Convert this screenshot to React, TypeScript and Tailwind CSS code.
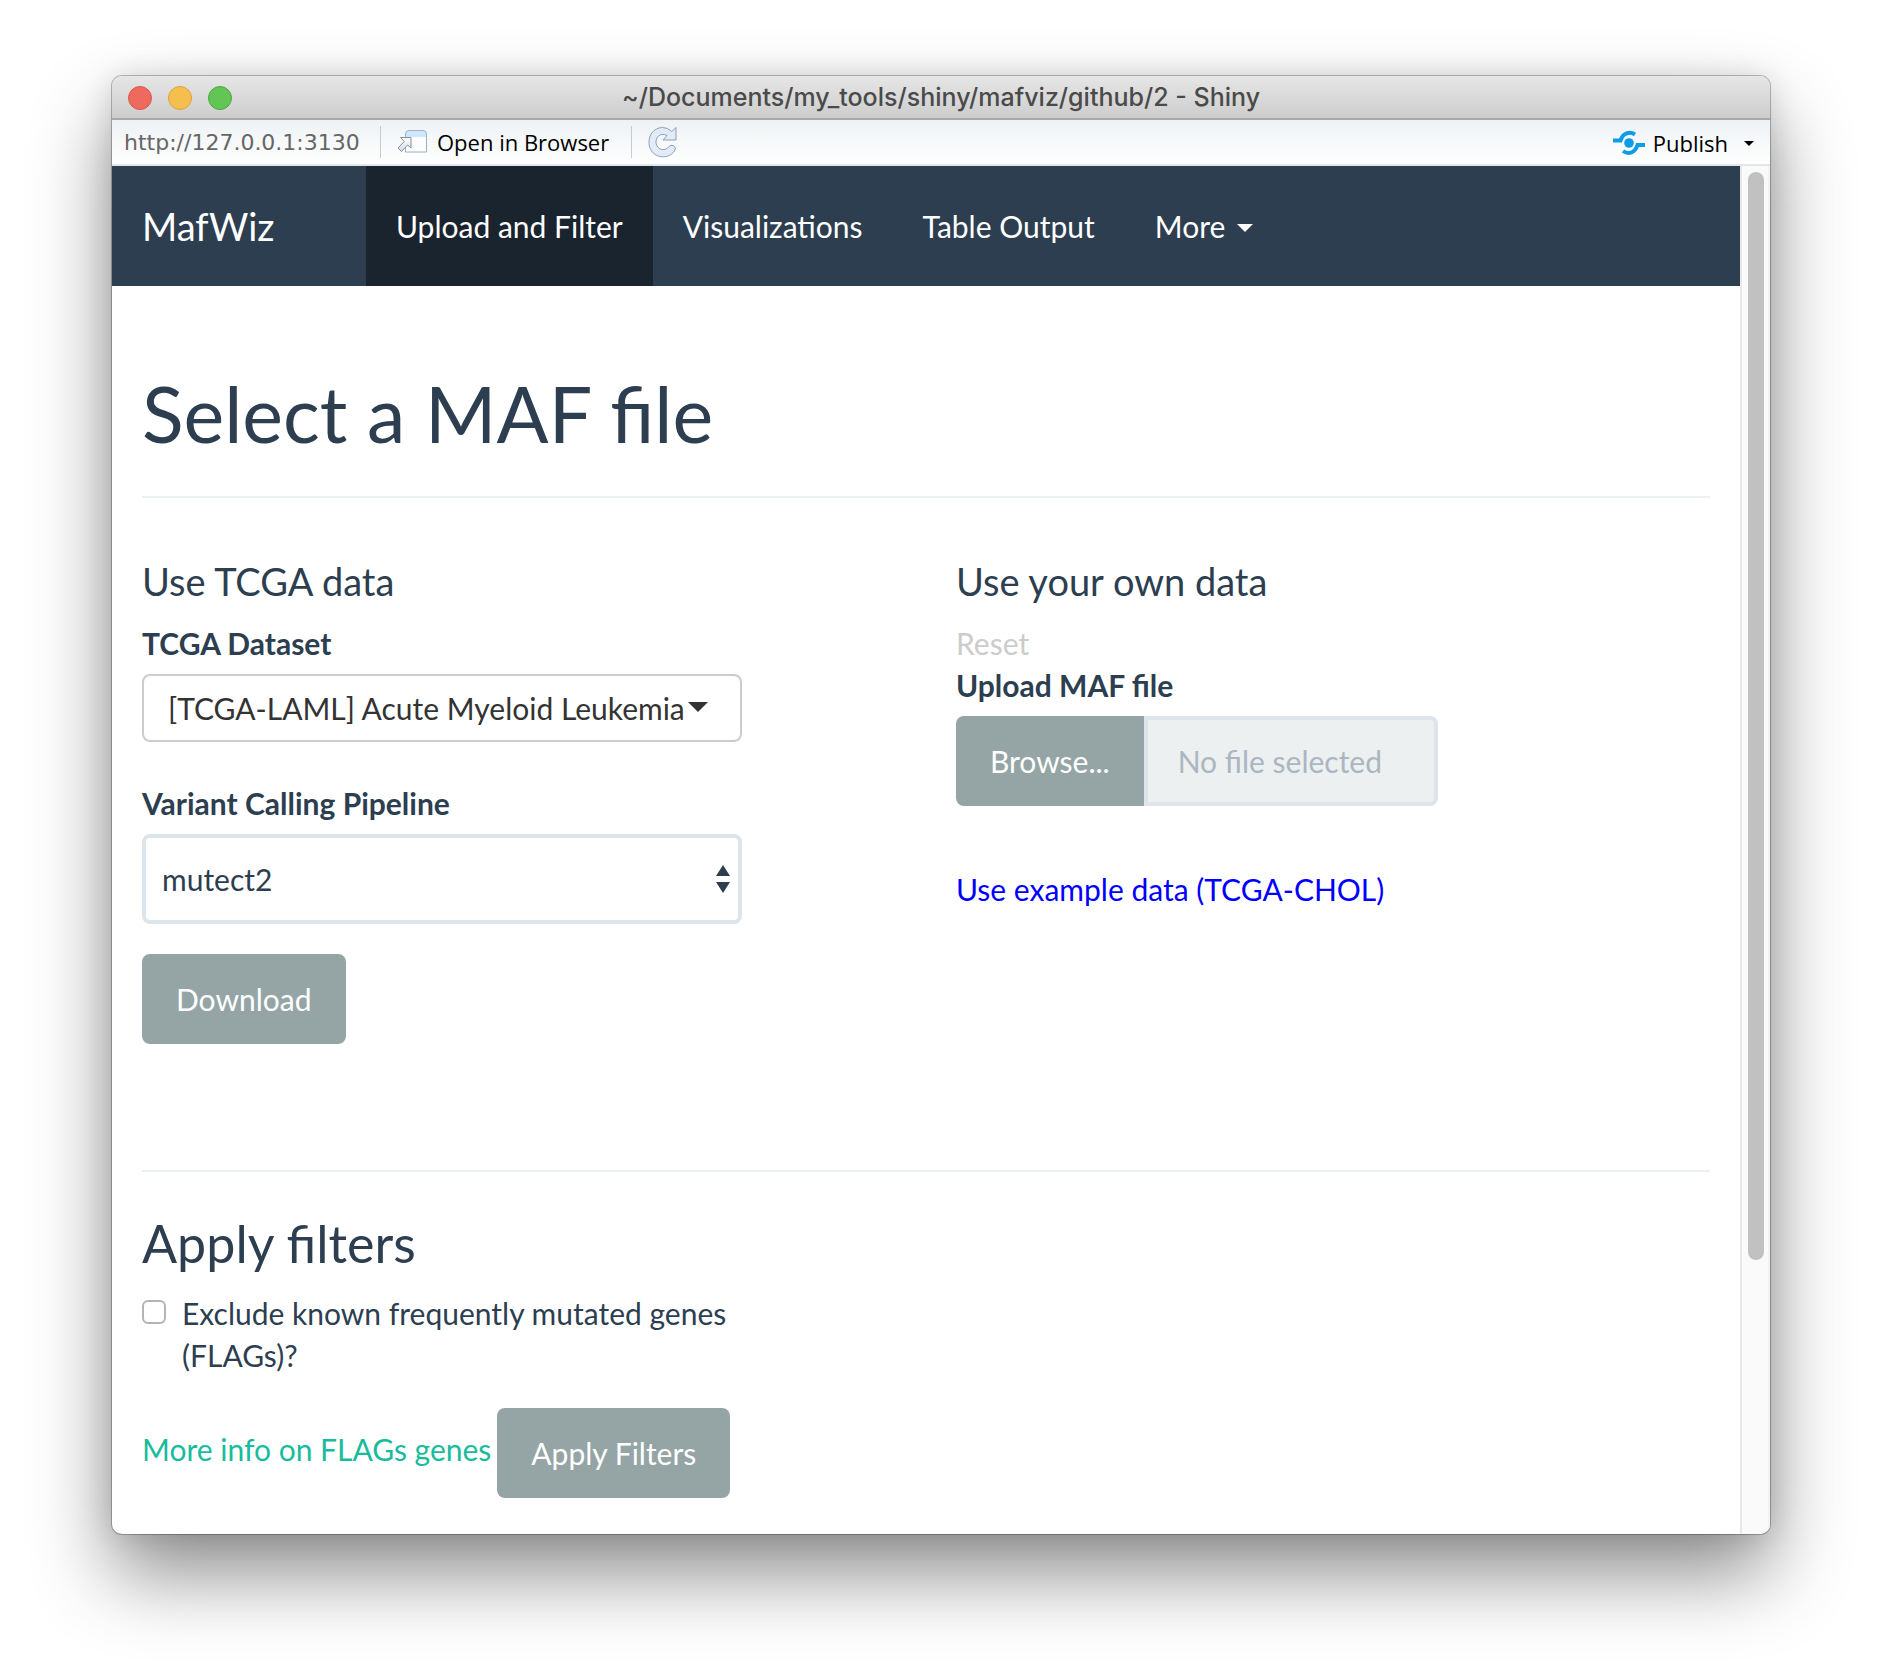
import React from "react";

const lato = "font-['Lato',sans-serif]";

function OpenIcon() {
  return (
    <svg width="30" height="26" viewBox="0 0 30 26" fill="none" aria-hidden="true">
      <defs>
        <linearGradient id="arrow" x1="0" y1="0" x2="0" y2="1">
          <stop offset="0" stopColor="#ffffff" />
          <stop offset="1" stopColor="#d5dbe2" />
        </linearGradient>
      </defs>
      <path d="M8.500 23V5q0-3.500 3.500-3.500h14q3.500 0 3.500 3.500v18z" fill="#fdfdff" />
      <path d="M8.500 8V5q0-3.500 3.500-3.500h14q3.500 0 3.500 3.500v3z" fill="#cfe6fb" />
      <path d="M8.500 23V5q0-3.500 3.500-3.500h14q3.500 0 3.500 3.500v18z" stroke="#9ab0c4" />
      <path d="M3.500 8.500h10.500v10.500l-3.300-3-6.200 6.500-3.500-3.500 6.300-6.500z" fill="url(#arrow)" stroke="#8090a0" />
    </svg>
  );
}

function ReloadIcon() {
  return (
    <svg width="29" height="32" viewBox="0 0 29 32" aria-hidden="true">
      <path
        d="M28 1.500V14H15l4-4.500C12 6 7.500 11.500 8 17c1 6.500 8.500 9 12.500 4q2.300-3 5.300-1.200t.7 5.200C20.500 33.500 6 33 1.700 21.500-1.500 10 6 1.500 14.500 1.500q5.500 0 9.300 4z"
        fill="#e2ecf8"
        stroke="#8f9fb3"
        strokeLinejoin="round"
      />
    </svg>
  );
}

function PublishIcon() {
  return (
    <svg width="32" height="26" viewBox="0 0 32 26" fill="none" aria-hidden="true">
      <circle cx="16" cy="13" r="4.800" fill="#0c9cea" />
      <path d="M0 10.500h7.500C10 3 16.500 1 22 4.500" stroke="#0c9cea" strokeWidth="4" />
      <path d="M32 15h-7.500C22 23 15.500 25 10 21" stroke="#0c9cea" strokeWidth="4" />
    </svg>
  );
}

function Caret({ className }: { className: string }) {
  return (
    <svg className={className} viewBox="0 0 16 8" fill="currentColor" preserveAspectRatio="none" aria-hidden="true">
      <path d="M0 0h16l-8 8z" />
    </svg>
  );
}

const navItem = "flex h-[120px] items-center px-[30px] text-[30px] text-white";
const greyButton = "h-[90px] bg-[#95a5a6] px-[34px] text-[30px] leading-[42px] text-white";

export default function App() {
  return (
    <div className="px-28 pt-[76px] pb-[148px]">
      <div className="overflow-hidden rounded-[10px] bg-white shadow-[0_0_0_1px_rgba(0,0,0,0.25),0_40px_80px_rgba(0,0,0,0.45),0_0_30px_rgba(0,0,0,0.12)]">
        <header className="grid h-11 grid-cols-[1fr_auto_1fr] items-center border-b-2 border-[#a8a8a8] bg-linear-to-b from-[#e6e6e6] to-[#cdcdcd] px-4 pt-0.5">
          <div className="flex gap-4">
            <button aria-label="Close" className="size-6 rounded-full border border-[#d9584e] bg-[#ee6a5f]" />
            <button aria-label="Minimize" className="size-6 rounded-full border border-[#dca23c] bg-[#f5bf4f]" />
            <button aria-label="Zoom" className="size-6 rounded-full border border-[#4fa73f] bg-[#61c654]" />
          </div>
          <h1 className="font-['Inter',sans-serif] text-[25px] font-medium text-[#4a4a4a]">~/Documents/my_tools/shiny/mafviz/github/2 - Shiny</h1>
        </header>

        <div className="flex h-[46px] items-center border-b-2 border-[#e2e6ea] bg-linear-to-b from-[#eef2f4] to-white pr-4 pl-3 font-['Open_Sans',sans-serif] text-[22px] text-black">
          <span className="min-w-60 font-['DejaVu_Sans',sans-serif] text-[#666]">http://127.0.0.1:3130</span>
          <span className="mx-4 h-8 w-px bg-[#c8cbce]" />
          <button className="flex min-w-[218px] items-center gap-2.5">
            <OpenIcon />
            Open in Browser
          </button>
          <span className="mx-4 h-8 w-px bg-[#c8cbce]" />
          <button aria-label="Reload">
            <ReloadIcon />
          </button>
          <button className="ml-auto flex items-center gap-2 pt-0.5">
            <PublishIcon />
            Publish
            <Caret className="ml-2 h-[5px] w-2.5" />
          </button>
        </div>

        <div className={`${lato} flex text-[#2c3e50]`}>
          <div className="min-w-0 flex-1">
            <nav className="flex bg-[#2c3e50]">
              <a href="#" className="flex h-[120px] w-[254px] items-center pl-[30px] text-[38px] text-white">
                MafWiz
              </a>
              <a href="#upload" className={`${navItem} bg-[#1a242f]`}>Upload and Filter</a>
              <a href="#visualizations" className={navItem}>Visualizations</a>
              <a href="#table" className={navItem}>Table Output</a>
              <button className={`${navItem} gap-3`}>
                More
                <Caret className="mt-1 h-2 w-4" />
              </button>
            </nav>

            <main className="px-[30px] pt-[84px] pb-9">
              <h2 className="text-[77px] leading-[86px]">Select a MAF file</h2>
              <hr className="mt-10 border-t-2 border-[#ecf0f1]" />

              <div className="-mx-[30px] grid grid-cols-2">
                <section className="mt-[62px] px-[30px]">
                  <h3 className="text-[38px] leading-[42px]">Use TCGA data</h3>
                  <label htmlFor="dataset" className="mt-5 block text-[30px] leading-[42px] font-bold">TCGA Dataset</label>
                  <div className="relative mt-2.5 max-w-[600px]">
                    <select id="dataset" className="h-[68px] w-full appearance-none rounded-lg border-2 border-[#ccc] bg-white px-6 text-[30px] text-[#333]">
                      <option>[TCGA-LAML] Acute Myeloid Leukemia</option>
                    </select>
                    <Caret className="pointer-events-none absolute top-7 right-[34px] h-2.5 w-5 text-[#333]" />
                  </div>
                  <label htmlFor="pipeline" className="mt-10 block text-[30px] leading-[42px] font-bold">Variant Calling Pipeline</label>
                  <div className="relative mt-2.5 max-w-[600px]">
                    <select id="pipeline" className="h-[90px] w-full appearance-none rounded-lg border-4 border-[#dce4ec] bg-white px-4 text-[30px]">
                      <option>mutect2</option>
                    </select>
                    <svg className="pointer-events-none absolute top-[31px] right-3 h-7 w-3.5" viewBox="0 0 14 28" fill="currentColor" aria-hidden="true">
                      <path d="M7 0l7 11H0zM7 28l7-11H0z" />
                    </svg>
                  </div>
                  <button className={`${greyButton} mt-[30px] rounded-lg`}>Download</button>
                </section>

                <section className="mt-[62px] px-[30px]">
                  <h3 className="text-[38px] leading-[42px]">Use your own data</h3>
                  <button className="mt-5 block text-[30px] leading-[42px] text-[#ccc]">Reset</button>
                  <label htmlFor="file" className="block text-[30px] leading-[42px] font-bold">Upload MAF file</label>
                  <div className="mt-2.5 flex max-w-[482px]">
                    <button className={`${greyButton} rounded-l-lg`}>Browse...</button>
                    <input
                      id="file"
                      readOnly
                      placeholder="No file selected"
                      className="h-[90px] min-w-0 flex-1 rounded-r-lg border-4 border-[#dce4ec] bg-[#ecf0f1] px-[30px] text-[30px] placeholder:text-[#acb6c0]"
                    />
                  </div>
                  <a href="#example" className="mt-[62px] inline-block text-[30px] leading-[42px] text-[#00f]">Use example data (TCGA-CHOL)</a>
                </section>
              </div>

              <hr className="mt-[126px] border-t-2 border-[#ecf0f1]" />
              <h3 className="mt-[42px] text-[52px] leading-[58px]">Apply filters</h3>
              <label className="mt-5 flex max-w-[600px] items-start gap-4 text-[30px] leading-[42px]">
                <input type="checkbox" className="mt-2 size-6 shrink-0 appearance-none rounded-md border-2 border-[#b4b4b4] bg-white" />
                Exclude known frequently mutated genes (FLAGs)?
              </label>
              <div className="mt-8 flex items-center gap-1.5">
                <a href="#flags" className="pb-2 text-[30px] leading-[42px] text-[#18bc9c]">More info on FLAGs genes</a>
                <button className={`${greyButton} rounded-lg`}>Apply Filters</button>
              </div>
            </main>
          </div>

          <div className="w-[30px] shrink-0 border-r-2 border-l-2 border-[#e8e8e8] border-r-[#f3f3f3] bg-[#fafafa] pt-1.5 pl-1.5">
            <div className="h-[1088px] w-4 rounded-full bg-[#c1c1c1]" />
          </div>
        </div>
      </div>
    </div>
  );
}
